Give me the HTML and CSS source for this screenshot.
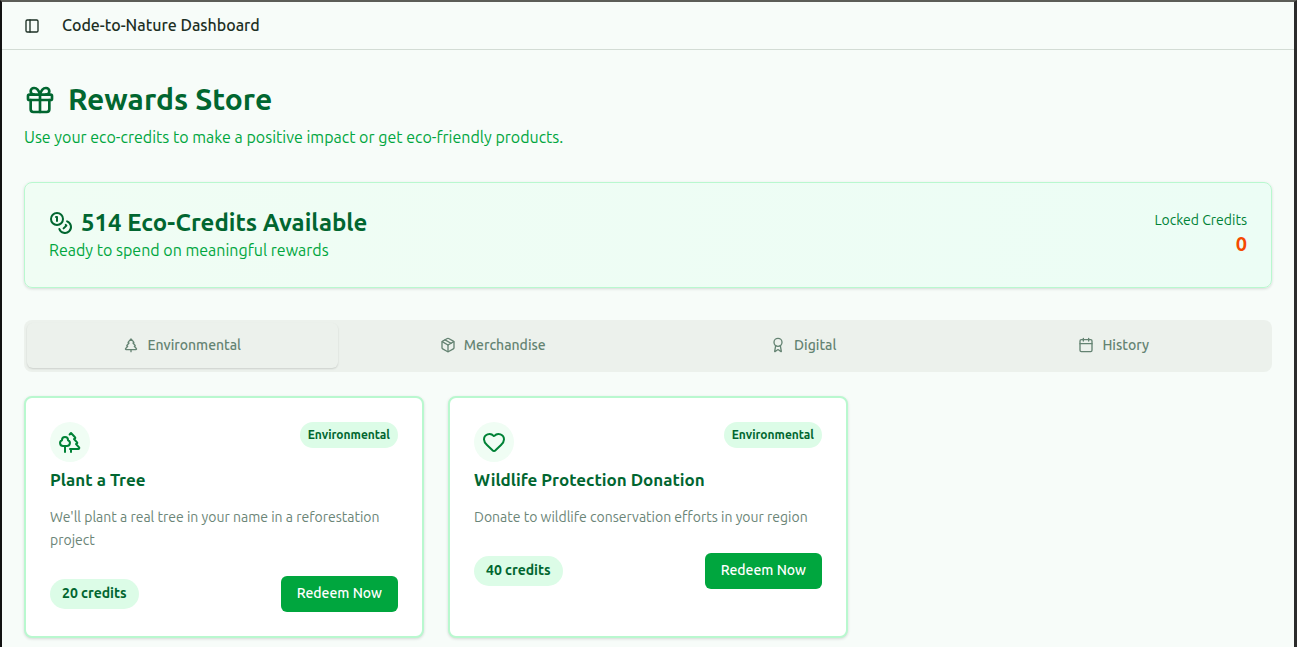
FILE: index.html
```html
<!DOCTYPE html>
<html lang="en">
<head>
<meta charset="utf-8">
<meta name="viewport" content="width=device-width, initial-scale=1">
<title>Code-to-Nature Dashboard</title>
<link rel="stylesheet" href="styles.css">
</head>
<body>
<header class="topbar">
  <button class="sidebar-toggle" type="button" aria-label="Toggle sidebar">
    <svg class="icon icon-sm" viewBox="0 0 24 24"><rect x="3" y="3" width="18" height="18" rx="2"/><path d="M9 3v18"/></svg>
  </button>
  <span class="topbar-title">Code-to-Nature Dashboard</span>
</header>
<main class="content">
  <section class="intro">
    <h1 class="page-title">
      <svg class="icon icon-xl" viewBox="0 0 24 24" aria-hidden="true"><rect x="3" y="8" width="18" height="4" rx="1"/><path d="M12 8v13"/><path d="M19 12v7a2 2 0 0 1-2 2H7a2 2 0 0 1-2-2v-7"/><path d="M7.5 8a2.5 2.5 0 0 1 0-5A4.8 8 0 0 1 12 8a4.8 8 0 0 1 4.5-5 2.5 2.5 0 0 1 0 5"/></svg>
      Rewards Store
    </h1>
    <p class="page-subtitle">Use your eco-credits to make a positive impact or get eco-friendly products.</p>
  </section>

  <section class="balance">
    <div>
      <h2 class="balance-title">
        <svg class="icon icon-lg" viewBox="0 0 24 24" aria-hidden="true"><circle cx="8" cy="8" r="6"/><path d="M18.09 10.37A6 6 0 1 1 10.34 18"/><path d="M7 6h1v4"/><path d="m16.71 13.88.7.71-2.82 2.82"/></svg>
        514 Eco-Credits Available
      </h2>
      <p class="balance-text">Ready to spend on meaningful rewards</p>
    </div>
    <div class="locked">
      <div class="locked-label">Locked Credits</div>
      <div class="locked-value">0</div>
    </div>
  </section>

  <div class="tabs" role="tablist">
    <button class="tab tab-active" type="button" role="tab" aria-selected="true">
      <svg class="icon icon-sm" viewBox="0 0 24 24" aria-hidden="true"><path d="m17 14 3 3.3a1 1 0 0 1-.7 1.7H4.7a1 1 0 0 1-.7-1.7L7 14h-.3a1 1 0 0 1-.7-1.7L9 9h-.2A1 1 0 0 1 8 7.3L12 3l4 4.3a1 1 0 0 1-.8 1.7H15l3 3.3a1 1 0 0 1-.7 1.7H17Z"/><path d="M12 22v-3"/></svg>
      Environmental
    </button>
    <button class="tab" type="button" role="tab" aria-selected="false">
      <svg class="icon icon-sm" viewBox="0 0 24 24" aria-hidden="true"><path d="M11 21.73a2 2 0 0 0 2 0l7-4A2 2 0 0 0 21 16V8a2 2 0 0 0-1-1.73l-7-4a2 2 0 0 0-2 0l-7 4A2 2 0 0 0 3 8v8a2 2 0 0 0 1 1.73z"/><path d="M12 22V12"/><path d="M3.29 7 12 12l8.71-5"/><path d="m7.5 4.27 9 5.15"/></svg>
      Merchandise
    </button>
    <button class="tab" type="button" role="tab" aria-selected="false">
      <svg class="icon icon-sm" viewBox="0 0 24 24" aria-hidden="true"><path d="m15.477 12.89 1.515 8.526a.5.5 0 0 1-.81.47l-3.58-2.687a1 1 0 0 0-1.197 0l-3.586 2.686a.5.5 0 0 1-.81-.469l1.514-8.526"/><circle cx="12" cy="8" r="6"/></svg>
      Digital
    </button>
    <button class="tab" type="button" role="tab" aria-selected="false">
      <svg class="icon icon-sm" viewBox="0 0 24 24" aria-hidden="true"><path d="M8 2v4M16 2v4"/><rect x="3" y="4" width="18" height="18" rx="2"/><path d="M3 10h18"/></svg>
      History
    </button>
  </div>

  <div class="rewards">
    <article class="card">
      <div class="card-top">
        <div class="card-icon"><svg class="icon icon-lg" viewBox="0 0 24 24" aria-hidden="true"><path d="M10 10v.2A3 3 0 0 1 8.9 16H5a3 3 0 0 1-1-5.8V10a3 3 0 0 1 6 0Z"/><path d="M7 16v6"/><path d="M13 19v3"/><path d="M12 19h8.3a1 1 0 0 0 .7-1.7L18 14h.3a1 1 0 0 0 .7-1.7L16 9h.2a1 1 0 0 0 .8-1.7L13 3l-1.4 1.5"/></svg></div>
        <span class="badge">Environmental</span>
      </div>
      <h3 class="card-title">Plant a Tree</h3>
      <p class="card-text">We'll plant a real tree in your name in a reforestation project</p>
      <div class="card-footer">
        <span class="credits">20 credits</span>
        <button class="redeem" type="button">Redeem Now</button>
      </div>
    </article>
    <article class="card">
      <div class="card-top">
        <div class="card-icon"><svg class="icon icon-lg" viewBox="0 0 24 24" aria-hidden="true"><path d="M2 9.5a5.5 5.5 0 0 1 9.591-3.676.56.56 0 0 0 .818 0A5.49 5.49 0 0 1 22 9.5c0 2.290-1.500 4-3 5.500l-5.492 5.313a2 2 0 0 1-3 .019L5 15c-1.500-1.500-3-3.200-3-5.500"/></svg></div>
        <span class="badge">Environmental</span>
      </div>
      <h3 class="card-title">Wildlife Protection Donation</h3>
      <p class="card-text">Donate to wildlife conservation efforts in your region</p>
      <div class="card-footer">
        <span class="credits">40 credits</span>
        <button class="redeem" type="button">Redeem Now</button>
      </div>
    </article>
  </div>
</main>
</body>
</html>
```
FILE: styles.css
```css
* { box-sizing: border-box; }

body {
  margin: 0;
  min-height: 100vh;
  border-top: 2px solid #5c5d58;
  border-left: 2px solid #121212;
  border-right: 3px solid #2b2b2b;
  background: #f7fcf9;
  color: #1c2f24;
  font-family: Ubuntu, "Noto Sans", "Open Sans", sans-serif;
  font-size: 16px;
  line-height: 24px;
}

h1, h2, h3, p { margin: 0; }
button { border: 0; font: inherit; cursor: pointer; }

.icon {
  flex: none;
  fill: none;
  stroke: currentColor;
  stroke-width: 2;
  stroke-linecap: round;
  stroke-linejoin: round;
}
.icon-sm { width: 16px; height: 16px; }
.icon-lg { width: 24px; height: 24px; }
.icon-xl { width: 32px; height: 32px; }

.topbar {
  display: flex;
  align-items: center;
  gap: 16px;
  height: 48px;
  padding: 0 16px;
  border-bottom: 1px solid #d3dcd5;
}
.sidebar-toggle {
  display: flex;
  align-items: center;
  justify-content: center;
  width: 28px;
  height: 28px;
  padding: 0;
  background: transparent;
  color: #1c2f24;
}
.topbar-title { padding-bottom: 1px; font-weight: 500; }

.content { padding: 32px 22px 9px; }

.page-title {
  display: flex;
  align-items: center;
  gap: 12px;
  color: #016630;
  font-size: 30px;
  font-weight: 700;
  line-height: 35px;
}
.page-subtitle {
  margin-top: 8px;
  color: #00a63e;
}

.balance {
  display: flex;
  align-items: flex-start;
  justify-content: space-between;
  margin-top: 33px;
  padding: 24px 24px 25px;
  border: 1px solid #b9f8cf;
  border-radius: 8px;
  background: linear-gradient(to right, #f0fdf4, #ecfdf5);
  box-shadow: 0 1px 3px rgba(0, 0, 0, 0.14);
}
.balance-title {
  display: flex;
  align-items: center;
  gap: 8px;
  color: #016630;
  font-size: 24px;
  font-weight: 700;
  line-height: 32px;
}
.balance-text { color: #00a63e; line-height: 23px; }
.locked { padding-top: 3px; text-align: right; }
.locked-label { color: #008236; font-size: 14px; line-height: 20px; }
.locked-value {
  color: #f54900;
  font-size: 20px;
  font-weight: 600;
  line-height: 28px;
}

.tabs {
  display: grid;
  grid-template-columns: repeat(4, 1fr);
  margin-top: 32px;
  padding: 3px 3px 4px;
  border-radius: 8px;
  background: #ecf1ec;
}
.tab {
  display: flex;
  align-items: center;
  justify-content: center;
  gap: 8px;
  height: 45px;
  padding: 0 8px 1px;
  border-radius: 6px;
  background: transparent;
  color: #648372;
  font-size: 14px;
  font-weight: 500;
}
.tab-active { box-shadow: 0 1px 2px rgba(0, 0, 0, 0.14); }

.rewards {
  display: grid;
  grid-template-columns: repeat(3, 1fr);
  gap: 24px;
  margin-top: 24px;
}
.card {
  padding: 24px;
  border: 2px solid #b9f8cf;
  border-radius: 8px;
  background: #fff;
  box-shadow: 0 1px 3px rgba(0, 0, 0, 0.14);
}
.card-top {
  display: flex;
  align-items: flex-start;
  justify-content: space-between;
}
.card-icon {
  display: flex;
  align-items: center;
  justify-content: center;
  width: 40px;
  height: 40px;
  border-radius: 50%;
  background: #f0fdf4;
  color: #008236;
}
.badge {
  padding: 1px 8px;
  border-radius: 13px;
  background: #dcfce7;
  color: #016630;
  font-size: 12px;
  font-weight: 600;
}
.card-title {
  margin-top: 4px;
  color: #016630;
  font-size: 17px;
  font-weight: 600;
  line-height: 28px;
}
.card-text {
  margin-top: 12px;
  color: #6b8577;
  font-size: 14px;
  line-height: 23px;
}
.card-footer {
  display: flex;
  align-items: center;
  justify-content: space-between;
  margin-top: 24px;
}
.credits {
  padding: 2px 12px 4px;
  border-radius: 15px;
  background: #dcfce7;
  color: #016630;
  font-size: 14px;
  font-weight: 600;
}
.redeem {
  height: 36px;
  padding: 0 16px 2px;
  border-radius: 6px;
  background: #00a63e;
  color: #fff;
  font-size: 14px;
  font-weight: 500;
}
```
